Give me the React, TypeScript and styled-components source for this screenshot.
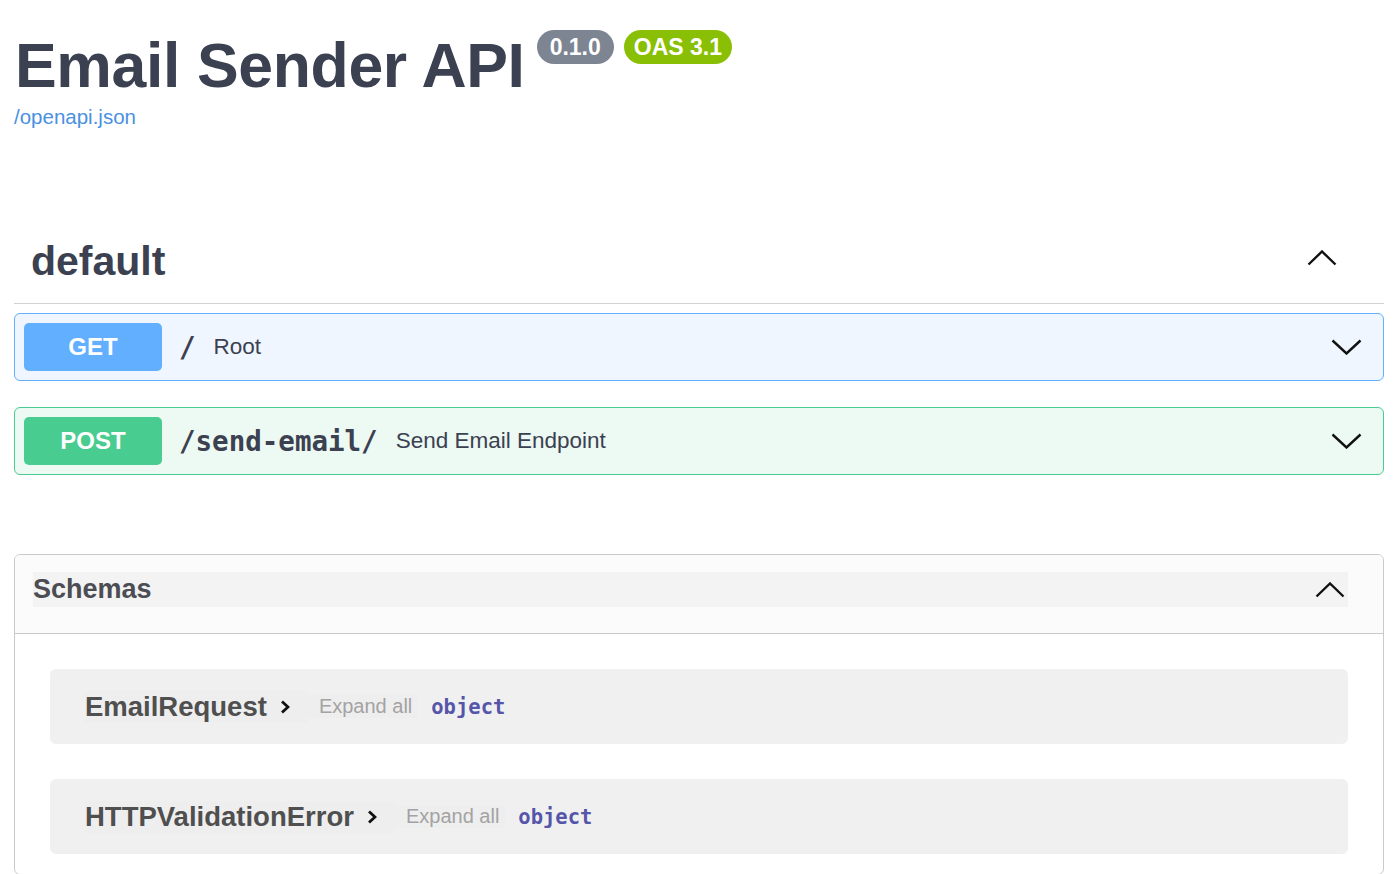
import React from "react";
import styled, { createGlobalStyle } from "styled-components";

const Global = createGlobalStyle`
  html, body { margin: 0; padding: 0; background: #fff; }
  body { font-family: "Liberation Sans", Arial, sans-serif; color: #3b4151; }
`;

const Page = styled.div`
  padding: 0 16px 40px 14px;
`;

const Info = styled.header`
  padding-top: 30px;
`;

const TitleRow = styled.div`
  display: flex;
  align-items: flex-start;
`;

const Title = styled.h1`
  margin: 4px 0 0 1px;
  font-size: 62.5px;
  line-height: 63px;
  font-weight: 700;
  color: #3b4151;
  letter-spacing: -0.35px;
`;

const Badge = styled.span<{ $bg: string; $ml: number; $px: number }>`
  display: inline-flex;
  align-items: center;
  height: 34px;
  padding: 0 ${(p) => p.$px}px;
  margin-left: ${(p) => p.$ml}px;
  border-radius: 17px;
  background: ${(p) => p.$bg};
  color: #fff;
  font-size: 23px;
  font-weight: 700;
`;

const Link = styled.a`
  display: block;
  margin-top: 7px;
  font-size: 20.5px;
  line-height: 25px;
  color: #4990e2;
  text-decoration: none;
`;

const TagRow = styled.div`
  display: flex;
  align-items: flex-start;
  justify-content: space-between;
  margin-top: 96px;
  padding: 16px 47px 21px 17px;
  border-bottom: 1px solid #d0d2d5;
`;

const TagTitle = styled.h2`
  margin: 0;
  font-size: 41px;
  line-height: 41px;
  font-weight: 700;
  color: #3b4151;
`;

const Chevron = styled.svg<{ $mt: number }>`
  margin-top: ${(p) => p.$mt}px;
  flex: none;
`;

const Block = styled.div<{ $border: string; $bg: string; $mt: number }>`
  display: flex;
  align-items: center;
  margin-top: ${(p) => p.$mt}px;
  padding: 9px 21px 9px 9px;
  border: 1px solid ${(p) => p.$border};
  border-radius: 6px;
  background: ${(p) => p.$bg};
`;

const Method = styled.span<{ $bg: string }>`
  display: flex;
  align-items: center;
  justify-content: center;
  width: 138px;
  height: 48px;
  border-radius: 5px;
  background: ${(p) => p.$bg};
  color: #fff;
  font-size: 24px;
  font-weight: 700;
  flex: none;
`;

const Path = styled.span`
  margin-left: 17px;
  font-family: "DejaVu Sans Mono", monospace;
  font-weight: 700;
  font-size: 27.5px;
  color: #3b4151;
`;

const Summary = styled.span`
  margin-left: 18px;
  font-size: 22.5px;
  color: #3b4151;
  flex: 1;
`;

const Models = styled.section`
  margin-top: 79px;
  border: 1px solid #c9cacd;
  border-radius: 6px;
  overflow: hidden;
`;

const ModelsHeader = styled.div`
  padding: 17px 35px 26px 18px;
  background: #fbfbfb;
  border-bottom: 1px solid #c9cacd;
`;

const ModelsButton = styled.div`
  display: flex;
  align-items: center;
  justify-content: space-between;
  height: 35px;
  padding-right: 3px;
  background: #f3f3f3;
`;

const ModelsTitle = styled.h3`
  margin: 0;
  font-size: 27px;
  font-weight: 700;
  color: #4b4d53;
`;

const ModelsBody = styled.div`
  display: flex;
  flex-direction: column;
  gap: 35px;
  padding: 35px 35px 20px;
`;

const ModelBox = styled.div`
  display: flex;
  align-items: center;
  height: 75px;
  padding-left: 35px;
  border-radius: 6px;
  background: #f0f0f0;
`;

const ModelName = styled.span`
  display: flex;
  align-items: center;
  font-size: 27.5px;
  font-weight: 700;
  color: #4f4f4f;
  background: #eeeeee;
`;

const Arrow = styled.svg`
  margin-left: 13px;
  margin-right: 17px;
`;

const Expand = styled.span`
  padding: 0 6px 0 12px;
  font-size: 20px;
  color: #a3a3a3;
  background: #eeeeee;
`;

const TypeName = styled.span`
  margin-left: 13px;
  font-family: "DejaVu Sans Mono", monospace;
  font-weight: 700;
  font-size: 20.5px;
  color: #55a;
`;

const Up = ({ mt }: { mt: number }) => (
  <Chevron $mt={mt} width="30" height="16" viewBox="0 0 30 16">
    <path d="M1.5 14.5 L15 1.5 L28.5 14.5" fill="none" stroke="#111" strokeWidth="2.4" />
  </Chevron>
);

const Down = () => (
  <Chevron $mt={0} width="31" height="16" viewBox="0 0 31 16">
    <path d="M1.5 1.5 L15.5 14.5 L29.5 1.5" fill="none" stroke="#111" strokeWidth="2.4" />
  </Chevron>
);

const Right = () => (
  <Arrow width="10" height="16" viewBox="0 0 10 16">
    <path d="M2 2.5 L8 8 L2 13.5" fill="none" stroke="#111" strokeWidth="2.8" />
  </Arrow>
);

const models = ["EmailRequest", "HTTPValidationError"];

export default function App() {
  return (
    <Page>
      <Global />
      <Info>
        <TitleRow>
          <Title>Email Sender API</Title>
          <Badge $bg="#7d8492" $ml={12} $px={13}>0.1.0</Badge>
          <Badge $bg="#89bf04" $ml={10} $px={10}>OAS 3.1</Badge>
        </TitleRow>
        <Link href="#">/openapi.json</Link>
      </Info>

      <TagRow>
        <TagTitle>default</TagTitle>
        <Up mt={9} />
      </TagRow>

      <Block $border="#61affe" $bg="#eff6ff" $mt={9}>
        <Method $bg="#61affe">GET</Method>
        <Path>/</Path>
        <Summary>Root</Summary>
        <Down />
      </Block>

      <Block $border="#49cc90" $bg="#edf9f3" $mt={26}>
        <Method $bg="#49cc90">POST</Method>
        <Path>/send-email/</Path>
        <Summary>Send Email Endpoint</Summary>
        <Down />
      </Block>

      <Models>
        <ModelsHeader>
          <ModelsButton>
            <ModelsTitle>Schemas</ModelsTitle>
            <Up mt={0} />
          </ModelsButton>
        </ModelsHeader>
        <ModelsBody>
          {models.map((m) => (
            <ModelBox key={m}>
              <ModelName>
                {m}
                <Right />
              </ModelName>
              <Expand>Expand all</Expand>
              <TypeName>object</TypeName>
            </ModelBox>
          ))}
        </ModelsBody>
      </Models>
    </Page>
  );
}
